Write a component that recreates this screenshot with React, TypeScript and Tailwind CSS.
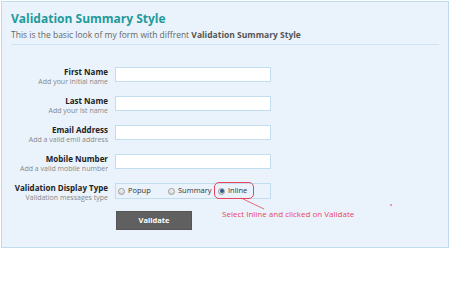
const FIELDS = [
  { label: 'First Name', hint: 'Add your initial name' },
  { label: 'Last Name', hint: 'Add your lst name' },
  { label: 'Email Address', hint: 'Add a valid emil address' },
  { label: 'Mobile Number', hint: 'Add a valid mobile number' },
];

const OPTIONS = [
  { label: 'Popup', checked: false },
  { label: 'Summary', checked: false },
  { label: 'Inline', checked: true },
];

function Radio({ checked }: { checked: boolean }) {
  return (
    <span className="w-[7px] h-[7px] rounded-full border border-[#9a9a9a] bg-gradient-to-b from-[#f4f4f4] to-[#d6d6d6] flex items-center justify-center shrink-0">
      {checked && <span className="w-[4px] h-[4px] rounded-full bg-[#2a5a8a]" />}
    </span>
  );
}

function Label({ label, hint }: { label: string; hint: string }) {
  return (
    <div className="w-[97px] text-right whitespace-nowrap">
      <div className="text-[8px] font-bold leading-[10px] text-[#222]">{label}</div>
      <div className="text-[7px] leading-[9px] text-[#888]">{hint}</div>
    </div>
  );
}

export default function App() {
  return (
    <div className="w-[450px] h-[299px] bg-white" style={{ fontFamily: '"Open Sans", "Noto Sans", sans-serif' }}>
      <div className="relative ml-px mt-px w-[448px] h-[247px] border border-[#bfdcee] bg-[#eaf3fb] px-[9px]">
        {/* Header */}
        <div className="pt-[8px] text-[12px] font-bold text-[#1f9a9c] leading-[17px]">Validation Summary Style</div>
        <div className="mt-[2px] text-[8.5px] leading-[11px] text-[#666]">
          This is the basic look of my form with diffrent <span className="font-bold text-[#555]">Validation Summary Style</span>
        </div>
        <div className="mt-[4px] h-px bg-[#cfe4f2]" />

        {/* Fields */}
        <div className="mt-[22px] flex flex-col">
          {FIELDS.map(f => (
            <div key={f.label} className="flex gap-[7px] h-[29px]">
              <Label label={f.label} hint={f.hint} />
              <div className="w-[156px] h-[15px] bg-white border border-[#c2dded]" />
            </div>
          ))}

          {/* Radio row */}
          <div className="flex gap-[7px] h-[28px]">
            <Label label="Validation Display Type" hint="Validation messages type" />
            <div className="w-[156px] h-[16px] border border-[#c2dded] flex items-center pl-[2px]">
              {OPTIONS.map((o, i) => (
                <div key={o.label} className={`flex items-center gap-[3px] ${i === 2 ? '' : 'w-[50px]'}`}>
                  <Radio checked={o.checked} />
                  <span className="text-[7.5px] text-[#333]">{o.label}</span>
                </div>
              ))}
            </div>
          </div>
        </div>

        {/* Button */}
        <div className="ml-[105px] w-[76px] h-[19px] bg-[#606060] border border-[#555] flex items-center justify-center text-[7.5px] font-bold text-white">
          Validate
        </div>

        {/* Annotation */}
        <div className="absolute left-[212px] top-[180px] w-[40px] h-[17px] rounded-[5px] border border-[#e8455c]" />
        <svg className="absolute left-[236px] top-[195px]" width="30" height="16" viewBox="0 0 30 16">
          <line x1="3" y1="1" x2="26" y2="12" stroke="#e8455c" strokeWidth="0.8" />
        </svg>
        <div className="absolute left-[220px] top-[206px] text-[8px] leading-[11px] text-[#e8455c]">
          Select Inline and clicked on Validate
        </div>
        <div className="absolute left-[388px] top-[202px] w-[1.5px] h-[2px] bg-[#e99aa5]" />
      </div>
    </div>
  );
}
